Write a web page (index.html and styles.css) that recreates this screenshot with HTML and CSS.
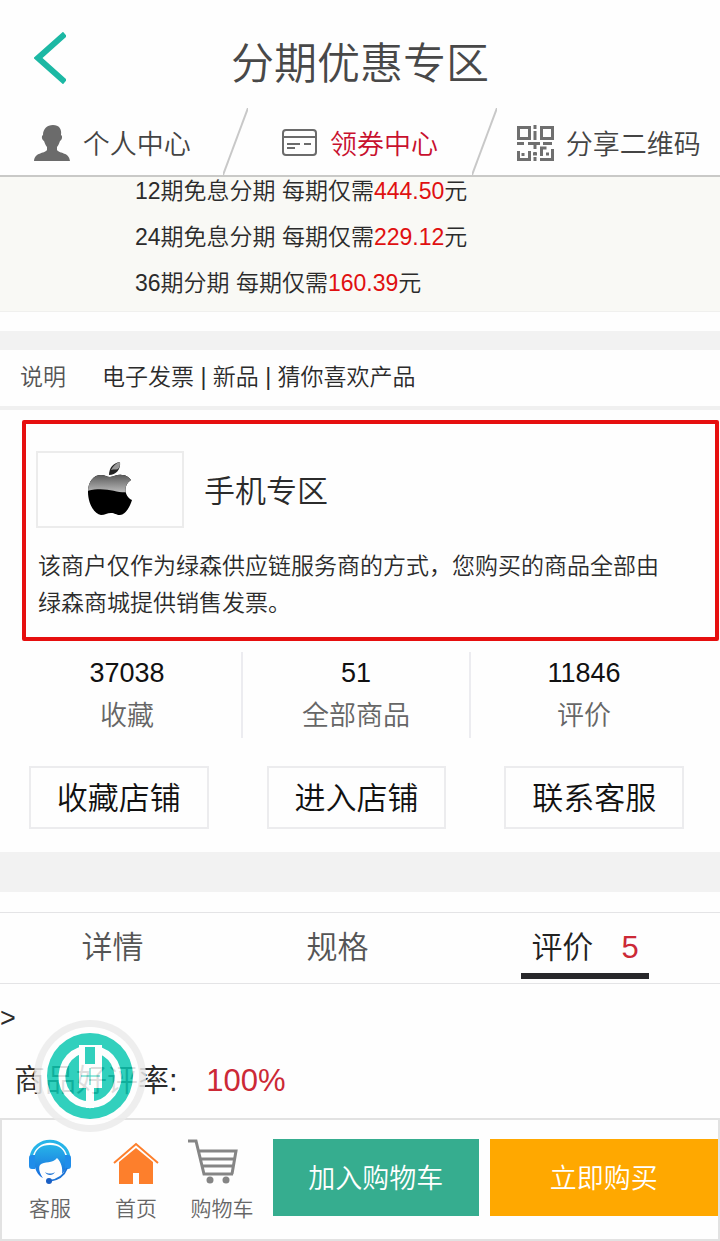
FILE: index.html
```html
<!DOCTYPE html>
<html lang="zh-CN">
<head>
    <meta charset="UTF-8">
    <meta name="viewport" content="width=device-width, initial-scale=1.0">
    <title>分期优惠专区</title>
    <link rel="stylesheet" href="styles.css">
</head>
<body>
    <header class="header">
        <div class="title-bar">
            <button class="back" aria-label="返回">
                <svg width="32" height="52" viewBox="0 0 32 52"><path d="M31 2L4 26l27 24" fill="none" stroke="#1cb8a4" stroke-width="6"/></svg>
            </button>
            <h1>分期优惠专区</h1>
        </div>
        <nav class="nav">
            <a href="#">
                <svg width="38" height="36" viewBox="0 0 38 36" fill="#6b6b6b"><path d="M20 0c6 0 9 4 8 10 2 1 1 5-1 6-1 3-2 5-3 6v3c3 4 12 2 13 11H1C2 27 11 29 14 25v-3c-1-1-2-3-3-6-2-1-3-5-1-6 0-6 4-10 10-10z"/></svg>
                个人中心
            </a>
            <svg width="25" height="67" viewBox="0 0 25 67"><path d="M25 0L0 67" stroke="#c8c8c8" stroke-width="2"/></svg>
            <a href="#" class="active">
                <svg width="36" height="28" viewBox="0 0 36 28" fill="none" stroke="#6b6b6b" stroke-width="2"><rect x="1" y="1" width="33" height="25" rx="3"/><path d="M1 8h33M5 15h13M22 15h7M5 19h8"/></svg>
                领券中心
            </a>
            <svg width="25" height="67" viewBox="0 0 25 67"><path d="M25 0L0 67" stroke="#c8c8c8" stroke-width="2"/></svg>
            <a href="#">
                <svg width="38" height="36" viewBox="0 0 38 36" fill="none" stroke="#6f6f6f" stroke-width="3"><path d="M2.500 2.500h11v11h-11zM25.500 2.500h11v11h-11zM19 0v4M19 6v9M1 18.500h7M12 18.500h12M27 18.500h9M19 17v7M2.500 26v8.500h11V26M7 28v3M19 27v3M19 32v4M17 29h4M24 34.500h12.500V24M25.500 31v-8h5M30 29h3"/></svg>
                分享二维码
            </a>
        </nav>
    </header>

    <main>
        <ul class="plans">
            <li>12期免息分期 每期仅需<em>444.50</em>元</li>
            <li>24期免息分期 每期仅需<em>229.12</em>元</li>
            <li>36期分期 每期仅需<em>160.39</em>元</li>
        </ul>

        <section class="note">
            <h2>说明</h2>
            <p>电子发票 | 新品 | 猜你喜欢产品</p>
        </section>

        <section class="shop">
            <div class="shop-head">
                <div class="logo">
                    <svg width="46" height="54" viewBox="0 0 46 54">
                        <defs>
                            <linearGradient id="gloss" x1="0" y1="0" x2="0" y2="1">
                                <stop offset="0" stop-color="#555"/>
                                <stop offset="1" stop-color="#bbb"/>
                            </linearGradient>
                            <clipPath id="apple">
                                <path d="M23 15c4 0 7-3 12-2 4 0 7 2 9 5-8 5-7 16 1 20-2 7-7 15-12 15-4 0-5-2-9-2s-6 2-10 2C7 52 1 41 1 30 1 19 7 13 14 13c4 0 6 2 9 2z"/>
                            </clipPath>
                        </defs>
                        <g clip-path="url(#apple)">
                            <rect width="46" height="54" fill="#000"/>
                            <path d="M0 12h46v17c-14 5-24-6-46 0z" fill="url(#gloss)"/>
                        </g>
                        <path d="M22 13C22 6 26 1 33 0c1 7-4 13-11 13z" fill="#222"/>
                        <path d="M24 8c2-4 5-7 9-8 0 3 0 5-2 7-2 1-4 0-7 1z" fill="#999"/>
                    </svg>
                </div>
                <h2>手机专区</h2>
            </div>
            <p class="shop-desc">该商户仅作为绿森供应链服务商的方式，您购买的商品全部由绿森商城提供销售发票。</p>
        </section>

        <ul class="stats">
            <li><strong>37038</strong><span>收藏</span></li>
            <li><strong>51</strong><span>全部商品</span></li>
            <li><strong>11846</strong><span>评价</span></li>
        </ul>
        <div class="shop-actions">
            <button>收藏店铺</button>
            <button>进入店铺</button>
            <button>联系客服</button>
        </div>

        <div class="tabs">
            <button>详情</button>
            <button>规格</button>
            <button class="current">评价<span class="count">5</span></button>
        </div>

        <section class="reviews">
            <p class="more">&gt;</p>
            <p class="rate">商品好评率: <em>100%</em></p>
            <button class="float-logo" aria-label="首页">
                <svg width="112" height="112" viewBox="0 0 112 112">
                    <circle cx="56" cy="56" r="56" fill="#ececec"/>
                    <circle cx="56" cy="56" r="49" fill="#fff"/>
                    <circle cx="56" cy="56" r="43" fill="#0ac8b1"/>
                    <path d="M46 30.500a28 28 0 1 0 20 0" fill="none" stroke="#fff" stroke-width="7"/>
                    <path d="M45 25h5v21h13V25h5v43h-8v20h-8V68h-7z" fill="#fff"/>
                    <path d="M50 25h13v21H50z" fill="#fff"/>
                    <path d="M51 27h10v17H51z" fill="#0ac8b1"/>
                    <path d="M56 48v17M47 56h19" stroke="#0ac8b1"/>
                </svg>
            </button>
        </section>
    </main>

    <footer class="bar">
        <a href="#">
            <svg width="44" height="46" viewBox="0 0 44 46">
                <defs>
                    <linearGradient id="blue" x1="0" y1="0" x2="0" y2="1">
                        <stop offset="0" stop-color="#27b4e8"/>
                        <stop offset="1" stop-color="#176bdf"/>
                    </linearGradient>
                </defs>
                <path d="M3 18C7-3 37-3 41 18" fill="none" stroke="#27b4e8" stroke-width="3"/>
                <path d="M6 20C7 10 13 6 22 6s15 4 16 14v10l-4 5c1-6-1-12-5-16-4 6-13 3-17 7-2 3 0 9 3 13-5-2-9-9-9-19z" fill="url(#blue)"/>
                <path d="M7 16v14H4c-2 0-3-1-3-3v-8c0-2 1-3 3-3zM37 16v14h3c2 0 3-1 3-3v-8c0-2-1-3-3-3z" fill="#1f8dea"/>
                <path d="M39 29c-3 8-9 12-18 13" fill="none" stroke="#1d74d6" stroke-width="2"/>
                <path d="M17 33c3 2 7 2 10 0-2 4-8 4-10 0z" fill="#1d74d6"/>
                <circle cx="21" cy="42" r="3" fill="#1a5fc4"/>
            </svg>
            客服
        </a>
        <a href="#">
            <svg width="48" height="46" viewBox="0 0 48 46" fill="#fd7f2c"><path d="M24 9l17 14v22H27V34h-6v11H7V23z"/><path d="M2 24L24 5l22 19" fill="none" stroke="#fd7f2c" stroke-width="2"/></svg>
            首页
        </a>
        <a href="#">
            <svg class="cart" width="52" height="46" viewBox="0 0 52 46" fill="none" stroke="#858585" stroke-width="3"><path d="M1 2h8l8 33h29M11 12h38l-4 23M13 20h34M15 27h31"/><circle cx="23" cy="41" r="3.500" fill="#858585" stroke="none"/><circle cx="39" cy="41" r="3.500" fill="#858585" stroke="none"/></svg>
            购物车
        </a>
        <div class="buy">
            <button class="add">加入购物车</button>
            <button class="now">立即购买</button>
        </div>
    </footer>
</body>
</html>
```

FILE: styles.css
```css
* {
    box-sizing: border-box;
    margin: 0;
    padding: 0;
}
body {
    font-family: "Liberation Sans", "Noto Sans CJK SC", sans-serif;
    font-size: 23px;
    font-weight: 350;
    color: #2b2b2b;
    background-color: #fefefe;
}
h1, h2, strong {
    font-weight: 350;
}
em {
    font-style: normal;
}
ul {
    list-style: none;
}
a {
    color: inherit;
    text-decoration: none;
}
button {
    font: inherit;
    color: inherit;
    background: none;
    border: none;
    cursor: pointer;
}
svg {
    display: block;
    flex: none;
}

/* header */
.header {
    border-bottom: 2px solid #c9c9c7;
}
.title-bar {
    display: grid;
    grid-template-columns: 1fr auto 1fr;
    align-items: center;
    height: 108px;
    padding: 20px 34px 0;
}
.back {
    align-self: start;
    justify-self: start;
    padding-top: 12px;
}
.title-bar h1 {
    font-size: 43px;
    line-height: 60px;
    color: #484848;
}
.nav {
    display: flex;
    font-size: 27px;
    color: #444;
}
.nav a {
    flex: 1;
    display: flex;
    align-items: center;
    justify-content: center;
    gap: 12px;
    padding-top: 2px;
    white-space: nowrap;
}
.nav .active {
    color: #c8102e;
}

/* installments */
.plans {
    display: grid;
    gap: 18px;
    padding: 0 0 14px 135px;
    line-height: 28px;
    background-color: #f9f9f5;
    border-bottom: 1px solid #f0f0ee;
}
.plans em {
    color: #e01010;
}
.note {
    display: flex;
    gap: 36px;
    margin-top: 19px;
    padding: 9px 20px 11px;
    line-height: 36px;
    border-top: 19px solid #f2f2f2;
    border-bottom: 4px solid #f0f0f0;
}
.note h2 {
    font-size: 23px;
    color: #555;
}

/* shop */
.shop {
    margin: 10px 1px 0 22px;
    padding: 27px 40px 15px 10px;
    border: 4px solid #e60f0f;
    border-radius: 2px;
}
.shop-head {
    display: flex;
    align-items: center;
    gap: 20px;
}
.logo {
    display: flex;
    align-items: center;
    justify-content: center;
    width: 148px;
    height: 77px;
    padding-bottom: 2px;
    border: 2px solid #ececec;
}
.shop h2 {
    padding-bottom: 2px;
    font-size: 31px;
}
.shop-desc {
    margin-top: 20px;
    padding-left: 2px;
    line-height: 37px;
}
.stats {
    display: grid;
    grid-template-columns: repeat(3, 1fr);
    margin-top: 11px;
    padding: 0 23px 0 13px;
    font-size: 27px;
    line-height: 43px;
    text-align: center;
}
.stats li + li {
    border-left: 2px solid #ececf0;
}
.stats strong, .stats span {
    display: block;
}
.stats strong {
    color: #111;
}
.stats span {
    color: #666;
}
.shop-actions {
    display: flex;
    gap: 58px;
    margin-top: 28px;
    padding: 0 36px 23px 29px;
    border-bottom: 40px solid #f2f2f2;
}
.shop-actions button {
    flex: 1;
    height: 63px;
    padding-bottom: 4px;
    font-size: 31px;
    color: #111;
    border: 2px solid #ececee;
}

/* tabs */
.tabs {
    display: grid;
    grid-template-columns: 5fr 5fr 6fr;
    justify-items: center;
    margin-top: 20px;
    padding-bottom: 4px;
    font-size: 31px;
    color: #555;
    border-top: 1px solid #e4e4e6;
    border-bottom: 1px solid #e4e4e6;
}
.tabs button {
    height: 66px;
    padding: 2px 10px 0;
    border-bottom: 6px solid transparent;
}
.tabs .current {
    color: #222;
    border-color: #27272a;
}
.count {
    margin-left: 28px;
    color: #cc2936;
}

/* reviews */
.reviews {
    position: relative;
    padding: 14px 0;
}
.more {
    font-size: 27px;
    line-height: 40px;
}
.rate {
    margin-top: 20px;
    padding-left: 14px;
    font-size: 31px;
    line-height: 46px;
}
.rate em {
    margin-left: 20px;
    color: #cc2936;
}
.float-logo {
    position: absolute;
    left: 34px;
    bottom: -14px;
    opacity: 0.84;
}

/* bottom bar */
.bar {
    display: flex;
    align-items: flex-start;
    padding: 19px 0 16px 5px;
    border: 2px solid #e2e2e2;
}
.bar a {
    display: flex;
    flex-direction: column;
    align-items: center;
    gap: 10px;
    width: 86px;
    font-size: 21px;
    line-height: 28px;
    color: #666;
}
.cart {
    align-self: flex-start;
    margin-left: 8px;
}
.buy {
    flex: 1;
    display: flex;
    gap: 11px;
    margin-left: 8px;
    font-size: 27px;
    color: #fff;
}
.buy button {
    height: 77px;
    padding-bottom: 2px;
}
.add {
    flex: 9;
    background-color: #36ad8f;
}
.now {
    flex: 10;
    background-color: #ffa800;
}
```
